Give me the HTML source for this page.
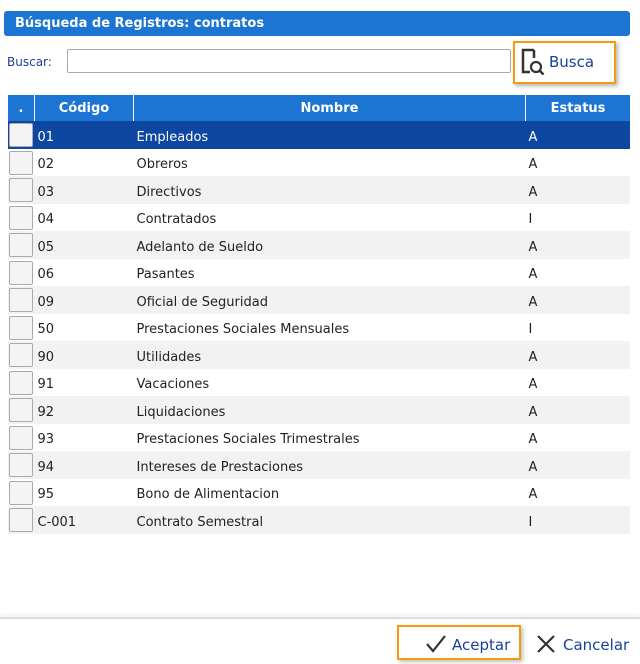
<!DOCTYPE html>
<html><head><meta charset="utf-8"><style>
body{margin:0;width:640px;height:664px;background:#fff;font-family:"DejaVu Sans","Liberation Sans",sans-serif;position:relative;overflow:hidden}
.t{position:absolute;left:4px;top:11px;width:626px;height:25px;background:#1c75d2;border-radius:3px;color:#fff;font-weight:bold;font-size:13px;line-height:25px;padding-left:11px;box-sizing:border-box}
.lbl{position:absolute;left:7px;top:55px;font-size:12px;color:#1a3f9a}
.inp{position:absolute;left:67px;top:49px;width:444px;height:24px;border:1px solid #aaa;border-radius:2px;box-sizing:border-box}
.bb{position:absolute;left:513px;top:41px;width:103px;height:43px;border:2px solid #f39c12;box-sizing:border-box;box-shadow:2px 2px 4px rgba(0,0,0,.3)}
.bt{position:absolute;left:549px;top:53px;font-size:15px;color:#1a3f9a}
table{position:absolute;left:8px;top:95px;width:622px;border-collapse:collapse;font-size:13px}
th{background:#1c75d2;color:#fff;height:25px;font-size:13px;border-left:1px solid #fff;padding:1px 0 0 0}
th:first-child{border-left:none}
td{height:27.5px;padding:5px 0 0 3px;color:#222;box-sizing:border-box}
tr:nth-child(even) td{background:#f2f2f2}
tr.sel td{background:#0d47a1;color:#fff}
td:first-child{padding-top:1px}
.cb{width:24px;height:24px;border:1px solid #aaa;background:#f4f4f4;border-radius:2px;box-sizing:border-box;margin-left:-2px}
.line{position:absolute;left:0;top:617px;width:640px;height:2px;background:#ddd;box-shadow:0 -2px 4px rgba(0,0,0,.1)}
.ab{position:absolute;left:397px;top:625px;width:124px;height:35px;border:2px solid #f39c12;box-sizing:border-box;box-shadow:2px 2px 4px rgba(0,0,0,.25)}
.tx{position:absolute;top:636px;font-size:15px;color:#1a3f9a}
</style></head><body>
<div class="t">Búsqueda de Registros: contratos</div>
<div class="lbl">Buscar:</div>
<div class="inp"></div>
<div class="bb"></div>
<svg style="position:absolute;left:520px;top:48px" width="26" height="30"><path d="M14 2H3v22h7" fill="none" stroke="#333" stroke-width="2.5"/><path d="M14 2v8" stroke="#333" stroke-width="2.5"/><circle cx="16" cy="19" r="5" fill="none" stroke="#333" stroke-width="2.2"/><path d="M19.5 22.5l4 4" stroke="#333" stroke-width="2.5"/></svg>
<div class="bt">Busca</div>
<table>
<tr><th style="width:26px">.</th><th style="width:98px">Código</th><th style="width:391px">Nombre</th><th>Estatus</th></tr>
<tr class="sel"><td><div class="cb"></div></td><td>01</td><td>Empleados</td><td>A</td></tr>
<tr><td><div class="cb"></div></td><td>02</td><td>Obreros</td><td>A</td></tr>
<tr><td><div class="cb"></div></td><td>03</td><td>Directivos</td><td>A</td></tr>
<tr><td><div class="cb"></div></td><td>04</td><td>Contratados</td><td>I</td></tr>
<tr><td><div class="cb"></div></td><td>05</td><td>Adelanto de Sueldo</td><td>A</td></tr>
<tr><td><div class="cb"></div></td><td>06</td><td>Pasantes</td><td>A</td></tr>
<tr><td><div class="cb"></div></td><td>09</td><td>Oficial de Seguridad</td><td>A</td></tr>
<tr><td><div class="cb"></div></td><td>50</td><td>Prestaciones Sociales Mensuales</td><td>I</td></tr>
<tr><td><div class="cb"></div></td><td>90</td><td>Utilidades</td><td>A</td></tr>
<tr><td><div class="cb"></div></td><td>91</td><td>Vacaciones</td><td>A</td></tr>
<tr><td><div class="cb"></div></td><td>92</td><td>Liquidaciones</td><td>A</td></tr>
<tr><td><div class="cb"></div></td><td>93</td><td>Prestaciones Sociales Trimestrales</td><td>A</td></tr>
<tr><td><div class="cb"></div></td><td>94</td><td>Intereses de Prestaciones</td><td>A</td></tr>
<tr><td><div class="cb"></div></td><td>95</td><td>Bono de Alimentacion</td><td>A</td></tr>
<tr><td><div class="cb"></div></td><td>C-001</td><td>Contrato Semestral</td><td>I</td></tr>
</table>
<div class="line"></div>
<div class="ab"></div>
<svg style="position:absolute;left:424px;top:632px" width="24" height="24"><path d="M3 12l6 7L21 4" fill="none" stroke="#333" stroke-width="2.2"/></svg>
<div class="tx" style="left:452px">Aceptar</div>
<svg style="position:absolute;left:536px;top:634px" width="20" height="20"><path d="M2 2l16 16M18 2L2 18" stroke="#333" stroke-width="2.2"/></svg>
<div class="tx" style="left:563px">Cancelar</div>
</body></html>
